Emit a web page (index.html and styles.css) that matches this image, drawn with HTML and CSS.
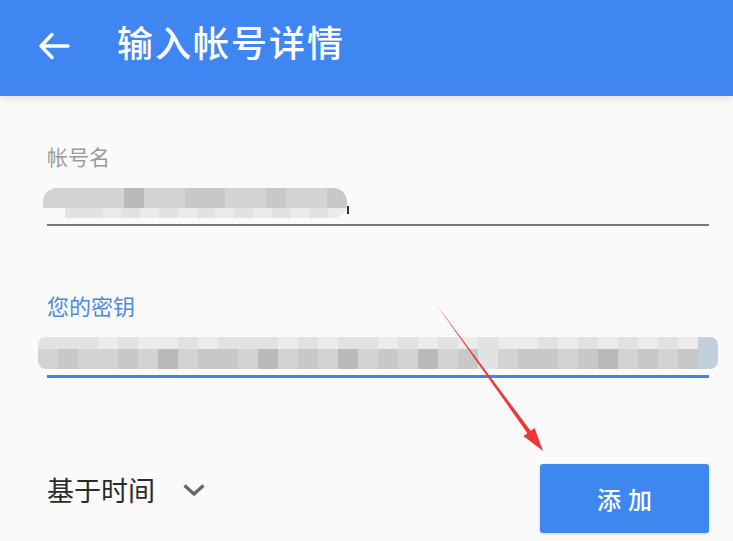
FILE: index.html
```html
<!DOCTYPE html>
<html lang="zh-CN">

<head>
    <meta charset="UTF-8">
    <meta name="viewport" content="width=device-width, initial-scale=1.0">
    <title>输入帐号详情</title>
    <link rel="stylesheet" href="styles.css">
</head>

<body>
    <div class="app">
        <header class="toolbar">
            <svg class="back" width="32" height="28" viewBox="0 0 32 28">
                <path d="M3 14 H30 M14 2.5 L3 14 L14 25.5" fill="none" stroke="#fff" stroke-width="3.4"
                    stroke-linecap="round" stroke-linejoin="round" />
            </svg>
            <h1 class="title">输入帐号详情</h1>
        </header>

        <main class="form">
            <div class="field">
                <label class="label">帐号名</label>
                <!-- account name, masked -->
                <div class="value">
                    <div class="mosaic name">
                        <div class="row top">
                            <span class="c"></span><span class="c"></span><span class="c"></span><span class="c"></span>
                            <span class="e"></span><span class="c"></span><span class="c"></span><span class="d"></span>
                            <span class="d"></span><span class="c"></span><span class="c"></span><span class="d"></span>
                            <span class="c"></span><span class="c"></span><span class="d"></span>
                        </div>
                        <div class="row bottom">
                            <span class="b"></span><span class="b"></span><span class="a"></span><span class="b"></span>
                            <span class="a"></span><span class="b"></span><span class="a"></span><span class="b"></span>
                            <span class="a"></span><span class="b"></span><span class="a"></span><span class="b"></span>
                            <span class="a"></span><span class="b"></span><span class="a"></span>
                        </div>
                    </div>
                    <span class="tail"></span>
                </div>
                <div class="line"></div>
            </div>

            <div class="field active">
                <label class="label">您的密钥</label>
                <!-- secret key, masked -->
                <div class="mosaic key">
                    <div class="row top">
                        <span class="b"></span><span class="b"></span><span class="b"></span><span class="a"></span>
                        <span class="b"></span><span class="a"></span><span class="a"></span><span class="b"></span>
                        <span class="a"></span><span class="b"></span><span class="b"></span><span class="b"></span>
                        <span class="a"></span><span class="b"></span><span class="a"></span><span class="b"></span>
                        <span class="b"></span><span class="a"></span><span class="b"></span><span class="a"></span>
                        <span class="b"></span><span class="a"></span><span class="b"></span><span class="a"></span>
                        <span class="a"></span><span class="b"></span><span class="a"></span><span class="b"></span>
                        <span class="a"></span><span class="b"></span><span class="a"></span><span class="b"></span>
                        <span class="a"></span><span class="f"></span>
                    </div>
                    <div class="row bottom">
                        <span class="c"></span><span class="d"></span><span class="c"></span><span class="c"></span>
                        <span class="d"></span><span class="c"></span><span class="e"></span><span class="c"></span>
                        <span class="d"></span><span class="d"></span><span class="c"></span><span class="e"></span>
                        <span class="c"></span><span class="d"></span><span class="c"></span><span class="e"></span>
                        <span class="c"></span><span class="d"></span><span class="c"></span><span class="e"></span>
                        <span class="c"></span><span class="d"></span><span class="b"></span><span class="c"></span>
                        <span class="d"></span><span class="d"></span><span class="c"></span><span class="d"></span>
                        <span class="e"></span><span class="c"></span><span class="d"></span><span class="c"></span>
                        <span class="d"></span><span class="f"></span>
                    </div>
                </div>
                <div class="line"></div>
            </div>

            <div class="actions">
                <div class="select">
                    <span class="select-text">基于时间</span>
                    <svg class="chevron" width="24" height="16" viewBox="0 0 24 16">
                        <path d="M2.5 3.5 L12 12 L21.5 3.5" fill="none" stroke="#666" stroke-width="3.2" />
                    </svg>
                </div>
                <button class="add">添加</button>
            </div>
        </main>

        <!-- red pointer drawn over the form -->
        <svg class="pointer" width="733" height="541" viewBox="0 0 733 541">
            <polygon points="436,304 530.6,430.8 534.6,427.9 543,451 523.4,436.1 527.4,433.2" fill="#ef3535" />
        </svg>
    </div>
</body>

</html>
```

FILE: styles.css
```css
* {
    box-sizing: border-box;
}

body {
    margin: 0;
    padding: 0;
    background-color: #fafafa;
    font-family: Roboto, "Noto Sans CJK SC", sans-serif;
}

.app {
    position: relative;
    width: 733px;
    height: 541px;
    overflow: hidden;
    background-color: #fafafa;
}

.toolbar {
    display: flex;
    align-items: center;
    height: 96px;
    padding-left: 38px;
    background-color: #4086f2;
    box-shadow: 0 2px 8px rgba(0, 0, 0, 0.12);
}

.back {
    display: block;
    margin-top: -4px;
}

.title {
    margin: 0 0 0 47px;
    margin-top: -6px;
    color: #fff;
    font-size: 36px;
    font-weight: 500;
    letter-spacing: 2px;
    line-height: 40px;
}

.form {
    padding: 50px 24px 0 47px;
}

.field.active {
    margin-top: 70px;
}

.label {
    display: block;
    color: #9a9a9a;
    font-size: 21px;
    line-height: 24px;
}

.active .label {
    color: #4a8ae6;
    font-size: 22px;
}

.value {
    display: flex;
    align-items: flex-end;
    margin-top: 18px;
}

.tail {
    width: 2px;
    height: 8px;
    margin: 0 0 4px 0;
    background-color: #333;
}

.mosaic {
    display: flex;
    flex-direction: column;
    overflow: hidden;
}

.mosaic .row {
    display: flex;
}

.mosaic span {
    flex: 1;
}

.mosaic.name {
    width: 304px;
    height: 30px;
    margin-left: -4px;
    border-radius: 14px 14px 14px 10px;
}

.mosaic.name .top {
    height: 20px;
}

.mosaic.name .bottom {
    height: 10px;
    margin-left: 22px;
}

.mosaic.key {
    height: 32px;
    margin: 17px -9px 0 -9px;
    border-radius: 8px;
}

.mosaic.key .top {
    height: 12px;
}

.mosaic.key .bottom {
    height: 20px;
}

/* mask shades */
.a { background-color: #ebebeb; }
.b { background-color: #e2e2e2; }
.c { background-color: #d3d3d3; }
.d { background-color: #c8c8c8; }
.e { background-color: #bababa; }
.f { background-color: #c3cedb; }

.line {
    height: 2px;
    margin-top: 6px;
    background-color: #7a7a7a;
}

.active .line {
    height: 3px;
    margin-top: 6px;
    background-color: #3f85e8;
}

.actions {
    display: flex;
    justify-content: space-between;
    align-items: flex-start;
    margin-top: 86px;
}

.select {
    display: flex;
    align-items: center;
    margin-top: 13px;
}

.select-text {
    color: #2b2b2b;
    font-size: 27px;
    line-height: 30px;
}

.chevron {
    display: block;
    margin-left: 27px;
    margin-top: -4px;
}

.add {
    width: 169px;
    height: 69px;
    border: none;
    border-radius: 3px;
    background-color: #3d87ef;
    color: #fff;
    font-family: inherit;
    font-size: 24px;
    font-weight: 500;
    letter-spacing: 7px;
    padding: 0 0 0 7px;
    box-shadow: 0 1px 3px rgba(0, 0, 0, 0.18);
}

.pointer {
    position: absolute;
    top: 0;
    left: 0;
    pointer-events: none;
}
```
